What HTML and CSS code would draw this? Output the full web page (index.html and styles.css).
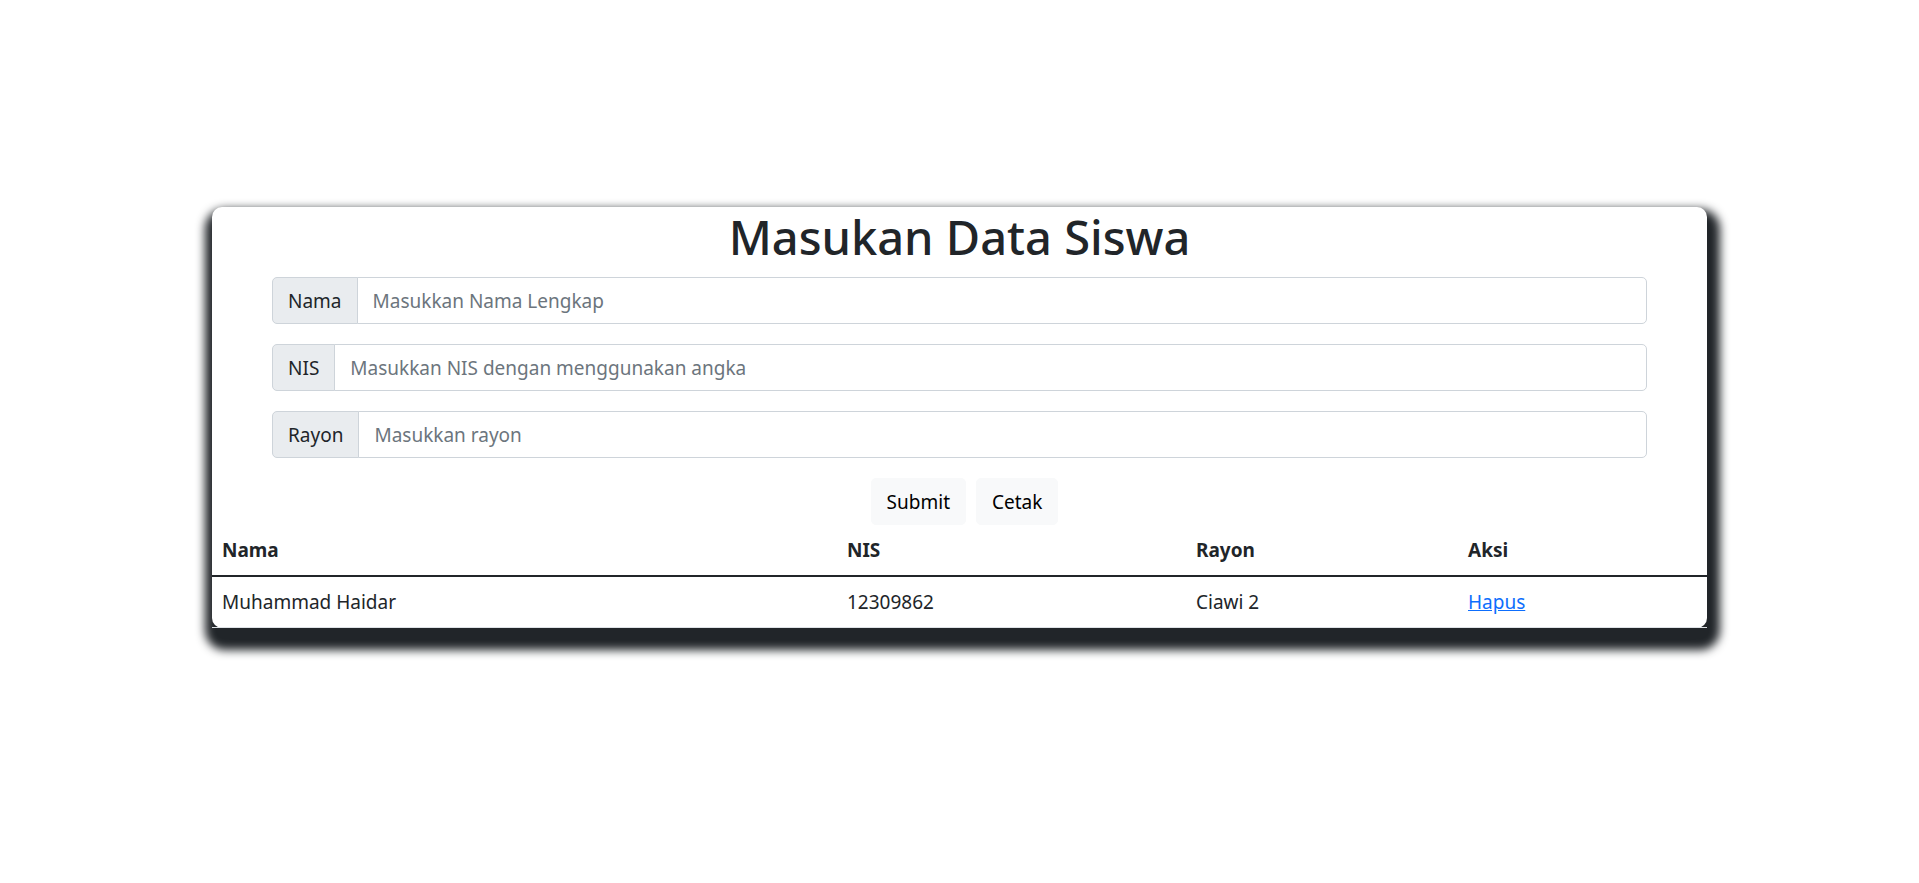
FILE: index.html
```html
<!DOCTYPE html>
<html lang="id">
<head>
<meta charset="utf-8">
<title>Masukan Data Siswa</title>
<link rel="stylesheet" href="styles.css">
</head>
<body>
<div class="page">
  <div class="card">
    <h1 class="title">Masukan Data Siswa</h1>
    <form class="form">
      <div class="input-group">
        <span class="input-label">Nama</span>
        <input class="input-control" type="text" placeholder="Masukkan Nama Lengkap">
      </div>
      <div class="input-group">
        <span class="input-label">NIS</span>
        <input class="input-control" type="text" placeholder="Masukkan NIS dengan menggunakan angka">
      </div>
      <div class="input-group">
        <span class="input-label">Rayon</span>
        <input class="input-control" type="text" placeholder="Masukkan rayon">
      </div>
      <div class="actions">
        <button class="btn" type="button">Submit</button>
        <button class="btn" type="button">Cetak</button>
      </div>
    </form>
    <table class="table">
      <thead>
        <tr>
          <th class="col-nama">Nama</th>
          <th class="col-nis">NIS</th>
          <th class="col-rayon">Rayon</th>
          <th class="col-aksi">Aksi</th>
        </tr>
      </thead>
      <tbody>
        <tr>
          <td>Muhammad Haidar</td>
          <td>12309862</td>
          <td>Ciawi 2</td>
          <td><a href="#" class="link">Hapus</a></td>
        </tr>
      </tbody>
    </table>
  </div>
</div>
</body>
</html>
```
FILE: styles.css
```css
* { box-sizing: border-box; }

html, body {
  margin: 0;
  padding: 0;
  background: #ffffff;
}

body {
  font-family: "Noto Sans", "Open Sans", sans-serif;
  font-size: 19px;
  line-height: 30px;
  color: #212529;
}

.page {
  min-height: 883px;
  padding-top: 207px;
  overflow: hidden;
}

.card {
  width: 1495px;
  margin: 0 auto;
  background: #ffffff;
  border-radius: 10px;
  box-shadow: 3px 12px 10px 10px #212529;
}

.title {
  margin: 0 0 10px;
  font-size: 47px;
  line-height: 60px;
  font-weight: 500;
  text-align: center;
  color: #212529;
}

.form {
  padding: 0 60px;
  margin: 0;
}

.input-group {
  display: flex;
  margin-bottom: 20px;
}

.input-label {
  display: flex;
  align-items: center;
  padding: 7.5px 15px;
  background: #e9ecef;
  border: 1px solid #ced4da;
  border-radius: 5px 0 0 5px;
  color: #212529;
  font-size: 19px;
  line-height: 30px;
  white-space: nowrap;
}

.input-control {
  flex: 1;
  min-width: 0;
  margin-left: -1px;
  padding: 7.5px 15px;
  border: 1px solid #ced4da;
  border-radius: 0 5px 5px 0;
  font-family: inherit;
  font-size: 19px;
  line-height: 30px;
  color: #212529;
  background: #ffffff;
  outline: none;
}

.input-control::placeholder {
  color: #6c757d;
  opacity: 1;
}

.actions {
  display: flex;
  justify-content: center;
  gap: 10px;
  padding-left: 10px;
}

.btn {
  padding: 7.5px 15px;
  border: 1px solid #f8f9fa;
  border-radius: 5px;
  background: #f8f9fa;
  font-family: inherit;
  font-size: 19px;
  line-height: 30px;
  color: #000000;
  cursor: pointer;
}

.table {
  width: 100%;
  border-collapse: collapse;
  table-layout: fixed;
}

.table th,
.table td {
  padding: 10px;
  text-align: left;
  vertical-align: top;
  border-bottom: 1px solid #dee2e6;
  font-size: 19px;
  line-height: 30px;
}

.table th {
  font-weight: 700;
}

.table tbody tr:first-child td {
  border-top: 2px solid #212529;
}

.col-nama { width: 625px; }
.col-nis { width: 349px; }
.col-rayon { width: 272px; }
.col-aksi { width: 249px; }

.link {
  color: #0d6efd;
  text-decoration: underline;
}
```
